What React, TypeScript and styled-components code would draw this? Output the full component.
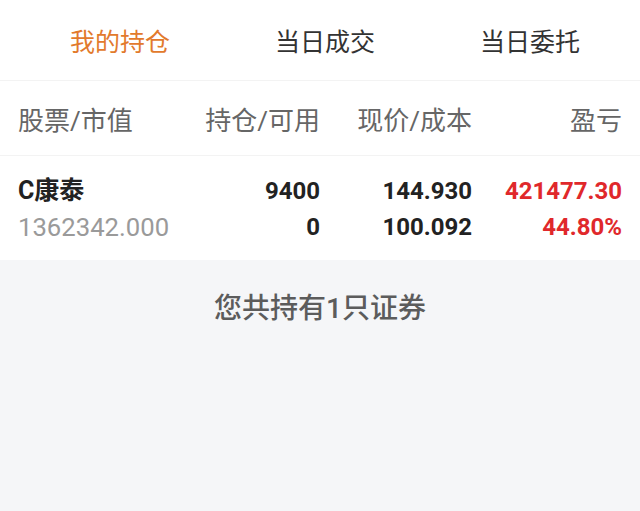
import React from "react";
import styled, {createGlobalStyle} from "styled-components";

const GlobalStyle = createGlobalStyle`
  html, body {
    margin: 0;
    padding: 0;
    background: #f5f6f8;
  }
  body {
    font-family: Roboto, "Noto Sans CJK SC", sans-serif;
  }
`;

const Page = styled.div`
  width: 640px;
  height: 511px;
  display: flex;
  flex-direction: column;
  background: #f5f6f8;
`;

const Tabs = styled.div`
  height: 81px;
  display: flex;
  align-items: center;
  justify-content: space-between;
  padding: 0 60px 0 70px;
  background: #fff;
  border-bottom: 1px solid #f3f3f3;
  box-sizing: border-box;
`;

const Tab = styled.div<{ $active?: boolean }>`
  font-size: 25px;
  color: ${p => p.$active ? '#e27a2c' : '#333'};
`;

const Grid = styled.div`
  display: grid;
  grid-template-columns: 170px 132px 152px 150px;
  padding: 0 18px;
  background: #fff;
`;

const HeaderRow = styled(Grid)`
  height: 75px;
  align-items: center;
  border-bottom: 1px solid #f3f3f3;
  box-sizing: border-box;
`;

const HeadCell = styled.div<{ $left?: boolean }>`
  font-size: 26px;
  color: #666;
  text-align: ${p => p.$left ? 'left' : 'right'};
`;

const DataRow = styled(Grid)`
  padding-top: 17px;
  padding-bottom: 14px;
  height: 104px;
  box-sizing: border-box;
`;

const Cell = styled.div<{ $left?: boolean }>`
  display: flex;
  flex-direction: column;
  align-items: ${p => p.$left ? 'flex-start' : 'flex-end'};
`;

const Line = styled.div<{ $tone?: 'red' | 'gray' }>`
  font-size: ${p => p.$tone === 'gray' ? '25.7px' : '24px'};
  line-height: 36px;
  font-weight: ${p => p.$tone === 'gray' ? 400 : 700};
  color: ${p => p.$tone === 'red' ? '#e0282b' : p.$tone === 'gray' ? '#9a9a9a' : '#222'};
`;

const Name = styled(Line)`
  font-size: 25px;
`;

const Summary = styled.div`
  padding-top: 26px;
  text-align: center;
  font-size: 28px;
  font-weight: 500;
  color: #5c5c5c;
`;

export default function App() {
  return (
    <Page>
      <GlobalStyle/>
      <Tabs>
        <Tab $active>我的持仓</Tab>
        <Tab>当日成交</Tab>
        <Tab>当日委托</Tab>
      </Tabs>
      <HeaderRow>
        <HeadCell $left>股票/市值</HeadCell>
        <HeadCell>持仓/可用</HeadCell>
        <HeadCell>现价/成本</HeadCell>
        <HeadCell>盈亏</HeadCell>
      </HeaderRow>
      <DataRow>
        <Cell $left>
          <Name>C康泰</Name>
          <Line $tone="gray">1362342.000</Line>
        </Cell>
        <Cell>
          <Line>9400</Line>
          <Line>0</Line>
        </Cell>
        <Cell>
          <Line>144.930</Line>
          <Line>100.092</Line>
        </Cell>
        <Cell>
          <Line $tone="red">421477.30</Line>
          <Line $tone="red">44.80%</Line>
        </Cell>
      </DataRow>
      <Summary>您共持有1只证券</Summary>
    </Page>
  );
}
